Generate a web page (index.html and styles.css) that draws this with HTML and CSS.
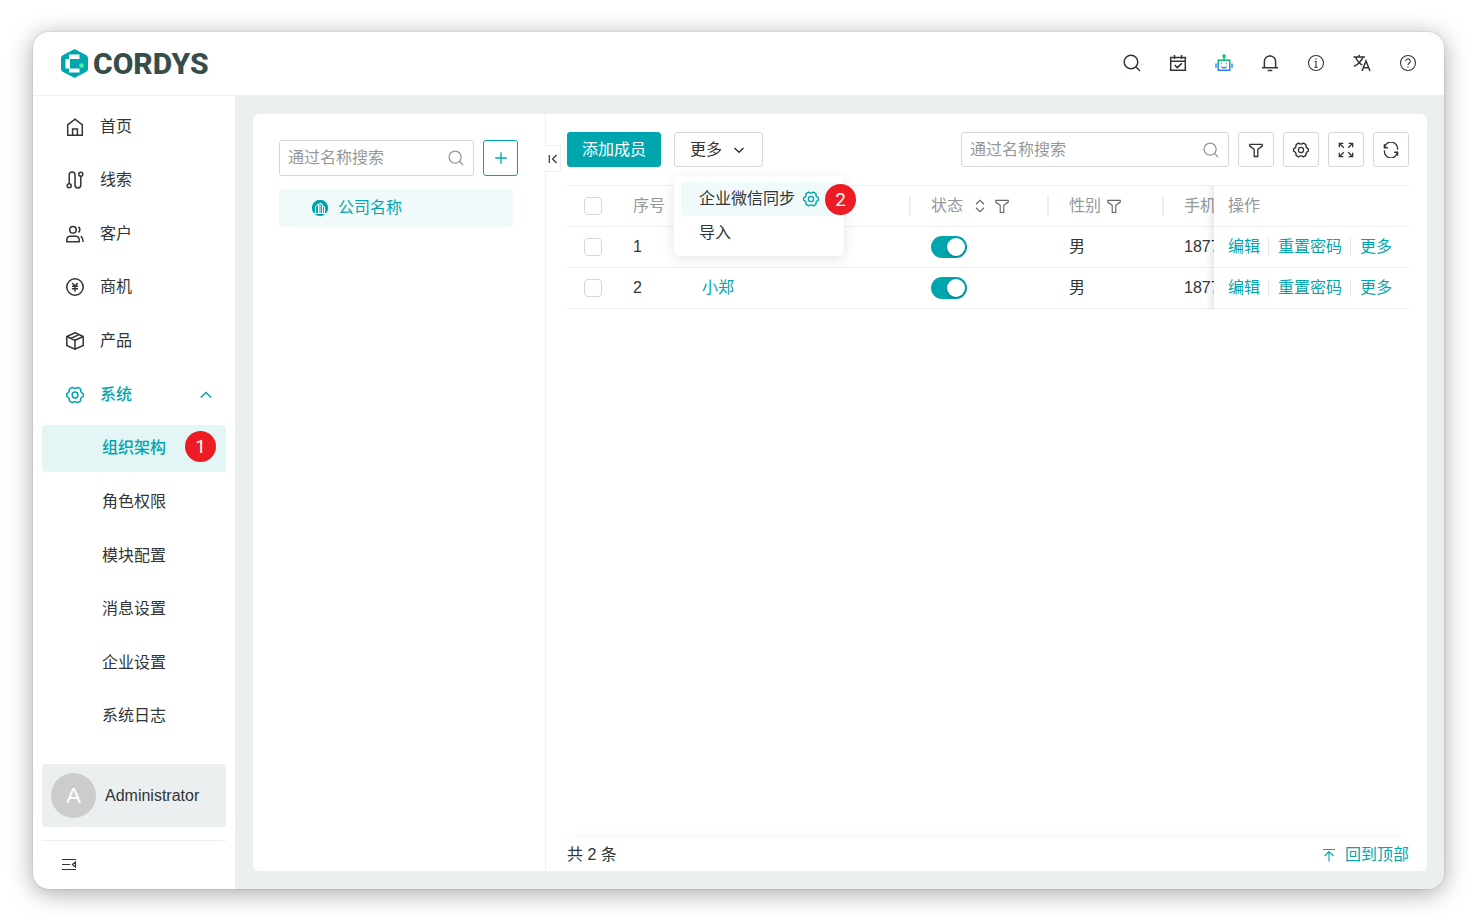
FILE: index.html
```html
<!DOCTYPE html>
<html lang="zh-CN">
<head>
    <meta charset="UTF-8">
    <meta name="viewport" content="width=device-width, initial-scale=1.0">
    <title>CORDYS</title>
    <link rel="stylesheet" href="styles.css">
</head>
<body>

    <svg class="sprite" aria-hidden="true">
        <symbol id="i-search" viewBox="0 0 18 18"><circle cx="8" cy="8" r="6.8"/><path d="M13 13l4 4"/></symbol>
        <symbol id="i-filter" viewBox="0 0 18 18"><path d="M2 2.600h14v2l-5 3.700v8H7v-8L2 4.600z"/></symbol>
        <symbol id="i-gear" viewBox="0 0 18 18"><path d="M6.200 1.300Q9 3.400 11.800 1.300L14.500 2.900Q14.200 6.500 17.300 7.600V10.400Q14.200 11.500 14.500 15.100L11.800 16.700Q9 14.600 6.200 16.700L3.500 15.100Q3.800 11.500 0.700 10.400V7.600Q3.800 6.500 3.500 2.900Z"/><circle cx="9" cy="9" r="2.900"/></symbol>
        <symbol id="i-down" viewBox="0 0 12 12"><path d="M1.500 4L6 8.300 10.500 4"/></symbol>
    </svg>

    <div class="window">
        <header class="header">
            <a class="logo" href="#">
                <svg viewBox="0 0 27 29" width="27" height="29" aria-hidden="true">
                    <path d="M13.500 0.600L25.400 6.800Q26.500 7.500 26.500 8.500V20.500Q26.500 21.500 25.400 22.200L13.500 28.400L1.600 22.200Q0.500 21.500 0.500 20.500V8.500Q0.500 7.500 1.600 6.800Z" fill="#00a6ad" stroke="#00a6ad"/>
                    <path d="M8 5.500H18.500V10H9V19.500H18.500V23.500H8V19.500H4.500V10H8Z" fill="#fff"/>
                    <circle cx="20.500" cy="16.500" r="2.300" fill="#4df0a8"/>
                </svg>
                <span>CORDYS</span>
            </a>
            <nav class="tools" aria-label="工具">
                <button aria-label="搜索"><svg class="icon"><use href="#i-search"/></svg></button>
                <button aria-label="日程">
                    <svg class="icon" viewBox="0 0 18 18"><path d="M1.700 3.500h14.600v12.800H1.700zM1.700 7.200h14.600M5.500 1v4M12.500 1v4M5.700 11l2.600 2.600 4.500-4.200"/></svg>
                </button>
                <button aria-label="智能助手">
                    <svg class="icon" viewBox="0 0 18 18">
                        <defs><linearGradient id="bot" x1="0" y1="0" x2="0" y2="18" gradientUnits="userSpaceOnUse"><stop offset="0.300" stop-color="#00c261"/><stop offset="0.850" stop-color="#2f7dff"/></linearGradient></defs>
                        <path stroke="url(#bot)" d="M3.200 6.300h11.600v10H3.200zM9 6.300V2.500M6.300 12.800q2.700 2 5.400 0"/>
                        <path stroke="#2f8bf5" d="M1 9.500v4.300M17 9.500v4.300M6.500 9.200v1M11.500 9.200v1"/>
                        <circle cx="9" cy="2" r="1" fill="#00c261" stroke="#00c261"/>
                    </svg>
                </button>
                <button aria-label="通知">
                    <svg class="icon" viewBox="0 0 18 18"><path d="M1 13.700h16M3.400 13.500V7.500a5.600 5.600 0 0 1 11.200 0v6M9 2V1M6.700 16.500h4.600"/></svg>
                </button>
                <button aria-label="信息">
                    <svg class="icon thin" viewBox="0 0 18 18"><circle cx="9" cy="9" r="7.500"/><path d="M9 4.300v1.500M7.500 7.500H9v5.700M7.300 13.300h3.500"/></svg>
                </button>
                <button aria-label="语言">
                    <svg class="icon" viewBox="0 0 18 18"><path d="M0.500 3h11.500M6.200 0.800V3M9.800 3Q8 8.800 1 12.400M2.800 3.500Q5 8.800 9.300 11M9 17l4-10 4 10M10.300 13.700h5.400"/></svg>
                </button>
                <button aria-label="帮助">
                    <svg class="icon thin" viewBox="0 0 18 18"><circle cx="9" cy="9" r="7.500"/><path d="M6.700 7.300a2.300 2.300 0 1 1 3.500 1.900Q9 9.900 9 11M9 12.300v1.300"/></svg>
                </button>
            </nav>
        </header>

        <div class="body">
            <aside class="sidebar">
                <ul class="menu">
                    <li><a href="#"><svg class="icon" viewBox="0 0 18 18"><path d="M1.700 6.800L9 1.200l7.300 5.600v10.400H1.700zM6.600 17v-6h4.800v6"/></svg>首页</a></li>
                    <li><a href="#"><svg class="icon" viewBox="0 0 18 18"><circle cx="3.200" cy="14.700" r="2"/><circle cx="14.800" cy="3.300" r="2"/><path d="M3.200 12.700V4a2.900 2.900 0 0 1 5.800 0v10a2.900 2.900 0 0 0 5.800 0V5.300"/></svg>线索</a></li>
                    <li><a href="#"><svg class="icon" viewBox="0 0 18 18"><circle cx="7" cy="4.700" r="3.300"/><path d="M0.800 16.800v-2a3.700 3.700 0 0 1 3.700-3.600h5a3.700 3.700 0 0 1 3.700 3.600v2zM12.500 1.800q2.700 2.700 0 5.800M14.800 11.200q2.400 2 2.400 5.800"/></svg>客户</a></li>
                    <li><a href="#"><svg class="icon" viewBox="0 0 18 18"><circle cx="9" cy="9" r="8.200"/><path d="M6.300 5L9 8l2.700-3M9 8v5.500M6 8.300h6M6 10.800h6"/></svg>商机</a></li>
                    <li><a href="#"><svg class="icon" viewBox="0 0 18 18"><path d="M9 0.800l8.200 3.700v9L9 17.200 0.800 13.500v-9zM0.800 4.500L9 8.300l8.200-3.800M9 8.300v8.900M4.800 6.500L12.900 2.600"/></svg>产品</a></li>
                    <li><a class="open" href="#"><svg class="icon"><use href="#i-gear"/></svg>系统<svg class="icon arrow" viewBox="0 0 12 12"><path d="M0.800 8.500L6 3.500l5.200 5"/></svg></a></li>
                    <li><a class="sub active" href="#">组织架构<span class="badge badge-menu">1</span></a></li>
                    <li><a class="sub" href="#">角色权限</a></li>
                    <li><a class="sub" href="#">模块配置</a></li>
                    <li><a class="sub" href="#">消息设置</a></li>
                    <li><a class="sub" href="#">企业设置</a></li>
                    <li><a class="sub" href="#">系统日志</a></li>
                </ul>
                <a class="user" href="#"><span class="avatar">A</span>Administrator</a>
                <div class="sidebar-foot">
                    <button aria-label="收起菜单">
                        <svg class="icon thin" viewBox="0 0 18 18"><path d="M2 3.500h14M2 8.500h8M2 13.500h14M15.500 6L12.300 8.500l3.200 2.500z"/></svg>
                    </button>
                </div>
            </aside>

            <main class="content">
                <section class="tree">
                    <div class="tree-bar">
                        <label class="search">
                            <input type="text" placeholder="通过名称搜索" aria-label="通过名称搜索">
                            <svg class="icon"><use href="#i-search"/></svg>
                        </label>
                        <button class="btn-add" aria-label="新增"><svg class="icon" viewBox="0 0 18 18"><path d="M9 2.500v13M2.500 9h13"/></svg></button>
                    </div>
                    <a class="tree-node" href="#">
                        <svg viewBox="0 0 18 18" width="18" height="18" aria-hidden="true">
                            <circle cx="9" cy="9" r="8.200" fill="#00a6ad"/>
                            <path d="M2.500 14.500h13M4.500 14V7.500L7.500 5v9M9 14V4l2.500 1.500V14M13.500 14V8l-2-1" fill="none" stroke="#fff"/>
                        </svg>
                        公司名称
                    </a>
                    <button class="fold" aria-label="收起"><svg class="icon" viewBox="0 0 12 12"><path d="M2.300 2v8M9.500 2l-4 4 4 4"/></svg></button>
                </section>

                <section class="members">
                    <div class="toolbar">
                        <button class="btn primary">添加成员</button>
                        <div class="dropdown">
                            <button class="btn">更多<svg class="icon"><use href="#i-down"/></svg></button>
                            <div class="dropdown-menu">
                                <button class="hover">企业微信同步<svg class="icon"><use href="#i-gear"/></svg></button>
                                <button>导入</button>
                                <span class="badge badge-drop">2</span>
                            </div>
                        </div>
                        <label class="search wide">
                            <input type="text" placeholder="通过名称搜索" aria-label="通过名称搜索成员">
                            <svg class="icon"><use href="#i-search"/></svg>
                        </label>
                        <button class="btn square" aria-label="筛选"><svg class="icon"><use href="#i-filter"/></svg></button>
                        <button class="btn square" aria-label="设置"><svg class="icon"><use href="#i-gear"/></svg></button>
                        <button class="btn square" aria-label="全屏"><svg class="icon" viewBox="0 0 18 18"><path d="M1.500 6V1.500H6M2 2l4.500 4.500M12 1.500h4.500V6M16 2l-4.500 4.500M1.500 12v4.500H6M2 16l4.500-4.500M16.500 12v4.500H12M16 16l-4.500-4.500"/></svg></button>
                        <button class="btn square" aria-label="刷新"><svg class="icon" viewBox="0 0 18 18"><path d="M1.500 2.500v4h4M1.800 6.300A7.300 7.300 0 0 1 16.300 8.500M16.500 15.500v-4h-4M16.200 11.700A7.300 7.300 0 0 1 1.700 9.500"/></svg></button>
                    </div>

                    <div class="table-wrap">
                        <table>
                            <colgroup>
                                <col class="c-check"><col class="c-no"><col class="c-name"><col class="c-status"><col class="c-sex"><col class="c-phone"><col class="c-op">
                            </colgroup>
                            <thead>
                                <tr>
                                    <th class="check"><input type="checkbox" aria-label="全选"></th>
                                    <th>序号</th>
                                    <th><div class="th-in"></div></th>
                                    <th><div class="th-in">状态<svg class="icon sort" viewBox="0 0 12 18"><path d="M1.500 7L6 2.500 10.500 7M1.500 11L6 15.500l4.500-4.500"/></svg><svg class="icon"><use href="#i-filter"/></svg></div></th>
                                    <th><div class="th-in">性别<svg class="icon"><use href="#i-filter"/></svg></div></th>
                                    <th class="clip">手机</th>
                                    <th class="op">操作</th>
                                </tr>
                            </thead>
                            <tbody>
                                <tr>
                                    <td class="check"><input type="checkbox" aria-label="选择 1"></td>
                                    <td>1</td>
                                    <td></td>
                                    <td><input class="switch" type="checkbox" checked aria-label="状态 1"></td>
                                    <td>男</td>
                                    <td class="clip">1877</td>
                                    <td class="op"><div class="actions"><a href="#">编辑</a><a href="#">重置密码</a><a href="#">更多</a></div></td>
                                </tr>
                                <tr>
                                    <td class="check"><input type="checkbox" aria-label="选择 2"></td>
                                    <td>2</td>
                                    <td><a href="#">小郑</a></td>
                                    <td><input class="switch" type="checkbox" checked aria-label="状态 2"></td>
                                    <td>男</td>
                                    <td class="clip">1877</td>
                                    <td class="op"><div class="actions"><a href="#">编辑</a><a href="#">重置密码</a><a href="#">更多</a></div></td>
                                </tr>
                            </tbody>
                        </table>
                    </div>

                    <footer class="table-foot">
                        <span>共 2 条</span>
                        <a href="#"><svg class="icon thin" viewBox="0 0 14 14"><path d="M1 1.500h12M7 13.500V3.500M2.500 8L7 3.500 11.500 8"/></svg>回到顶部</a>
                    </footer>
                </section>
            </main>
        </div>
    </div>

</body>
</html>
```
FILE: styles.css
```css
* {
    box-sizing: border-box;
}

body {
    margin: 0;
    padding: 32px 32px 33px 33px;
    height: 100vh;
    display: flex;
    background: #fff;
    color: #323535;
    font-family: "Liberation Sans", "Noto Sans CJK SC", sans-serif;
    font-size: 16px;
    line-height: 24px;
}

button,
input {
    margin: 0;
    font: inherit;
    color: inherit;
}

button {
    padding: 0;
    border: none;
    background: none;
    cursor: pointer;
}

a {
    color: #00a6ad;
    text-decoration: none;
}

.sprite {
    position: absolute;
    width: 0;
    height: 0;
}

.icon {
    display: block;
    flex: none;
    width: 18px;
    height: 18px;
    fill: none;
    stroke: currentColor;
    stroke-width: 1.5;
}

.thin {
    stroke-width: 1.1;
}

.window {
    flex: 1;
    display: flex;
    flex-direction: column;
    overflow: hidden;
    border-radius: 16px;
    background: #fff;
    box-shadow: 0 4px 24px rgba(0, 0, 0, 0.35), 0 0 2px rgba(0, 0, 0, 0.2);
}

/* header */
.header {
    display: flex;
    align-items: center;
    justify-content: space-between;
    height: 64px;
    padding: 0 27px 0 28px;
    border-bottom: 1px solid #edf0f0;
}

.logo {
    display: flex;
    align-items: center;
    gap: 5px;
    color: #364d4b;
    font-family: Roboto, sans-serif;
    font-size: 30px;
    font-weight: 800;
}

.tools {
    display: flex;
    gap: 28px;
    padding-bottom: 2px;
}

.body {
    flex: 1;
    display: flex;
    min-height: 0;
}

/* sidebar */
.sidebar {
    flex: none;
    display: flex;
    flex-direction: column;
    width: 202px;
    padding: 7px 9px 0;
}

.menu {
    flex: 1;
    display: flex;
    flex-direction: column;
    justify-content: space-between;
    margin: 0 0 24px;
    padding: 0;
    list-style: none;
}

.menu a {
    position: relative;
    display: flex;
    align-items: center;
    gap: 16px;
    height: 47px;
    padding: 0 14px 0 24px;
    border-radius: 4px;
    color: #323535;
}

.menu .open,
.menu .active {
    color: #00a6ad;
    font-weight: 500;
}

.menu .sub {
    padding-left: 60px;
}

.menu .active {
    background: #e3f5f5;
}

.menu .arrow {
    width: 12px;
    height: 12px;
    margin-left: auto;
}

.badge {
    position: absolute;
    width: 31px;
    height: 31px;
    border-radius: 50%;
    background: #ed1c24;
    color: #fff;
    font-family: Roboto, sans-serif;
    font-size: 19px;
    font-weight: 400;
    line-height: 31px;
    text-align: center;
}

.badge-menu {
    top: 6px;
    right: 10px;
}

.user {
    display: flex;
    align-items: center;
    gap: 9px;
    height: 63px;
    margin-bottom: 13px;
    padding: 0 9px;
    border-radius: 4px;
    background: #ebefef;
    color: #323535;
}

.avatar {
    width: 45px;
    height: 45px;
    border-radius: 50%;
    background: #ccc;
    color: #fff;
    font-size: 22px;
    line-height: 45px;
    text-align: center;
}

.sidebar-foot {
    display: flex;
    align-items: center;
    height: 49px;
    padding-left: 18px;
    border-top: 1px solid #edf0f0;
}

/* content */
.content {
    flex: 1;
    display: flex;
    min-width: 0;
    padding: 18px 17px 18px 18px;
    background: #ebefef;
}

.tree {
    position: relative;
    flex: none;
    width: 293px;
    padding: 26px 27px 0 26px;
    border-right: 1px solid #edf0f0;
    border-radius: 6px 0 0 6px;
    background: #fff;
}

.tree-bar {
    display: flex;
    gap: 9px;
    margin-bottom: 13px;
}

.search {
    flex: 1;
    display: flex;
    align-items: center;
    min-width: 0;
    height: 36px;
    padding: 0 9px 0 8px;
    border: 1px solid #d4d8d8;
    border-radius: 3px;
    color: #959898;
}

.search input {
    flex: 1;
    min-width: 0;
    padding: 0;
    border: none;
    outline: none;
    background: none;
}

.search input::placeholder {
    color: #959898;
    opacity: 1;
}

.search .icon,
.btn-add .icon {
    width: 16px;
    height: 16px;
}

.btn-add {
    display: flex;
    align-items: center;
    justify-content: center;
    width: 35px;
    height: 36px;
    border: 1px solid #00a6ad;
    border-radius: 3px;
    color: #00a6ad;
}

.tree-node {
    display: flex;
    align-items: center;
    gap: 9px;
    height: 38px;
    margin-right: 5px;
    padding-left: 32px;
    border-radius: 4px;
    background: #f0fafb;
}

.fold {
    position: absolute;
    top: 31px;
    right: -16px;
    display: flex;
    align-items: center;
    justify-content: center;
    width: 16px;
    height: 27px;
    border: 1px solid #edf0f0;
    border-left: none;
    background: #fff;
    z-index: 1;
}

.fold .icon {
    width: 12px;
    height: 12px;
    stroke-width: 1.2;
}

.members {
    flex: 1;
    display: flex;
    flex-direction: column;
    min-width: 0;
    padding: 18px 18px 0 21px;
    border-radius: 0 6px 6px 0;
    background: #fff;
}

.toolbar {
    display: flex;
    gap: 9px;
    margin-bottom: 18px;
}

.btn {
    display: flex;
    align-items: center;
    justify-content: center;
    gap: 9px;
    height: 35px;
    padding: 0 15px;
    border: 1px solid #d4d8d8;
    border-radius: 3px;
    background: #fff;
}

.primary {
    padding: 0 14px;
    border-color: #00a6ad;
    background: #00a6ad;
    color: #fff;
}

.square {
    width: 36px;
    padding: 0;
}

.square .icon {
    width: 16px;
    height: 16px;
}

.toolbar .search {
    flex: none;
    width: 268px;
    height: 35px;
    margin-left: auto;
}

.dropdown {
    position: relative;
    margin-left: 4px;
}

.dropdown .btn .icon {
    width: 12px;
    height: 12px;
    margin: 0 2px;
}

.dropdown-menu {
    position: absolute;
    top: 44px;
    left: 0;
    width: 170px;
    padding: 6px 7px;
    border-radius: 6px;
    background: #fff;
    box-shadow: 0 3px 14px rgba(0, 0, 0, 0.1);
    z-index: 2;
}

.dropdown-menu button {
    display: flex;
    align-items: center;
    gap: 8px;
    width: 100%;
    height: 34px;
    padding-left: 18px;
    border-radius: 4px;
    white-space: nowrap;
}

.dropdown-menu .hover {
    background: #f0fafb;
}

.dropdown-menu .icon {
    width: 16px;
    height: 16px;
    color: #00a6ad;
}

.badge-drop {
    top: 8px;
    right: -12px;
}

/* table */
.table-wrap {
    flex: 1;
    overflow: hidden;
}

table {
    width: 100%;
    table-layout: fixed;
    border-spacing: 0;
    border-top: 1px solid #edf0f0;
}

.c-check { width: 52px; }
.c-no { width: 69px; }
.c-status { width: 138px; }
.c-sex { width: 115px; }
.c-phone { width: 44px; }
.c-op { width: 195px; }

th,
td {
    height: 41px;
    padding: 0 0 0 14px;
    border-bottom: 1px solid #edf0f0;
    font-weight: 400;
    text-align: left;
    white-space: nowrap;
}

th {
    color: #959898;
}

.check {
    padding-left: 17px;
}

.clip {
    overflow: hidden;
}

.th-in {
    display: flex;
    align-items: center;
    gap: 5px;
    height: 20px;
    margin-right: 6px;
    border-right: 2px solid #ebefef;
}

.th-in .icon {
    width: 16px;
    height: 16px;
    color: #646767;
    stroke-width: 1.3;
}

.th-in .sort {
    width: 12px;
    margin: 0 3px 0 6px;
}

input[type="checkbox"] {
    display: block;
    appearance: none;
    width: 18px;
    height: 18px;
    border: 1px solid #d4d8d8;
    border-radius: 4px;
    background: #fff;
}

input.switch {
    width: 36px;
    height: 22px;
    padding: 2px;
    border: none;
    border-radius: 11px;
    background: #00a6ad;
}

.switch::before {
    content: "";
    display: block;
    width: 18px;
    height: 18px;
    margin-left: auto;
    border-radius: 50%;
    background: #fff;
    box-shadow: 0 1px 3px rgba(0, 0, 0, 0.3);
}

.op {
    position: relative;
    background: #fff;
}

.op::before {
    content: "";
    position: absolute;
    top: 0;
    bottom: -1px;
    left: -8px;
    width: 8px;
    background: linear-gradient(to left, rgba(0, 0, 0, 0.08), transparent);
}

.actions {
    display: flex;
    align-items: center;
    height: 18px;
}

.actions a + a {
    margin-left: 8px;
    padding-left: 9px;
    border-left: 1px solid #e4e8e8;
    line-height: 18px;
}

/* footer */
.table-foot {
    display: flex;
    align-items: center;
    justify-content: space-between;
    height: 33px;
    box-shadow: 0 -6px 8px -4px rgba(0, 0, 0, 0.04);
}

.table-foot a {
    display: flex;
    align-items: center;
    gap: 9px;
}

.table-foot .icon {
    width: 14px;
    height: 14px;
}
```
